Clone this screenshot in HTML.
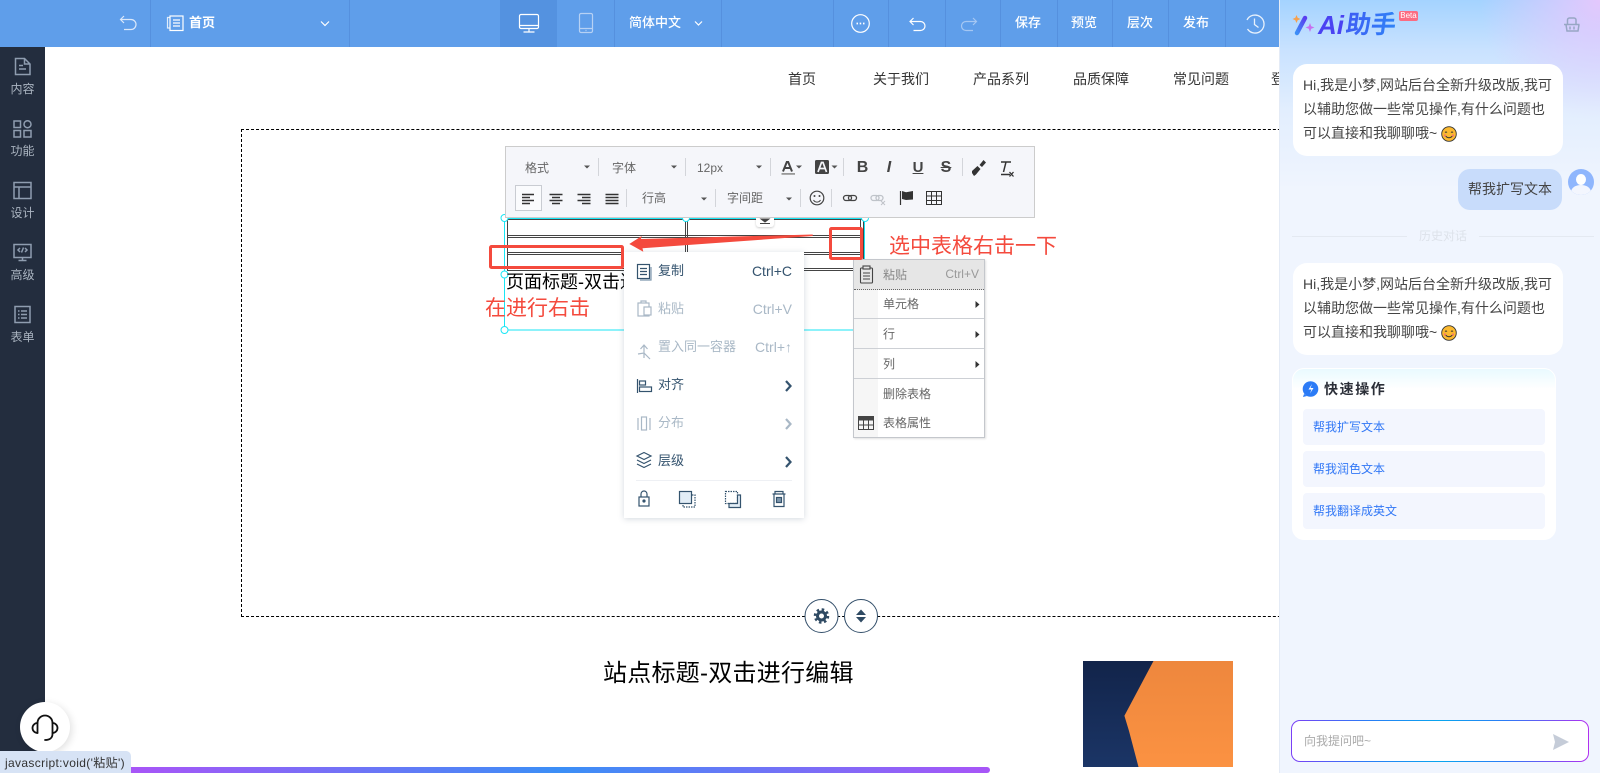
<!DOCTYPE html>
<html lang="zh-CN"><head><meta charset="utf-8"><title>编辑器</title>
<style>
*{box-sizing:border-box;margin:0;padding:0}
html,body{width:1600px;height:773px;overflow:hidden;background:#fff}
body{position:relative;font-family:"Liberation Sans","Noto Sans CJK SC",sans-serif;color:#333}
.a{position:absolute}
.t{position:absolute;white-space:nowrap;line-height:20px}
svg.l{position:absolute;left:0;top:0;width:1600px;height:773px;pointer-events:none}
.hd{left:0;top:0;width:1279px;height:47px;background:#5f9eea}
.hd i{position:absolute;top:0;width:1px;height:47px;background:#5590de}
.hd .t{color:#fff;top:13px;font-size:13px;font-weight:700}
.sb{left:0;top:47px;width:45px;height:726px;background:#232d3e}
.sb .t{left:0;width:45px;text-align:center;font-size:12px;color:#aab4c0}
.nav{font-size:14px;color:#333;top:69px}
.tb{left:505px;top:146px;width:530px;height:72px;background:#f5f6fa;border:1px solid #ccc}
.tbt{font-size:12px;color:#666}
.m1{left:624px;top:252px;width:180px;height:266px;background:#fff;box-shadow:0 1px 6px rgba(60,80,110,.22)}
.m1t{font-size:13px;color:#34536e}
.dis{color:#a9b8c6}
.m2{left:853px;top:259px;width:132px;height:179px;background:#fff;border:1px solid #c4c7cc;box-shadow:1px 1px 2px rgba(0,0,0,.12)}
.m2t{font-size:12px;color:#666}
.pn{left:1279px;top:0;width:321px;height:773px;border-left:1px solid #e4ebf6;background:radial-gradient(circle at 100% 0,#e4c8fd 0,rgba(228,200,253,0) 120px),linear-gradient(180deg,#a4d3ff 0,#c9e2ff 50px,#e2eefe 110px,#f0f5fe 190px)}
.bb{position:absolute;background:#fff;border-radius:14px}
.pt{font-size:14px;color:#444}
.qb{left:1303px;width:242px;height:36px;background:#f3f6fe;border-radius:4px}
.qt{font-size:12px;color:#3278f6;left:1313px}
</style></head><body>

<!-- page content -->
<div class="t nav" style="left:788px">首页</div>
<div class="t nav" style="left:873px">关于我们</div>
<div class="t nav" style="left:973px">产品系列</div>
<div class="t nav" style="left:1073px">品质保障</div>
<div class="t nav" style="left:1173px">常见问题</div>
<div class="t nav" style="left:1271px">登录</div>
<div class="a" style="left:241px;top:129px;width:1100px;height:488px;border:1px dashed #000"></div>
<div class="t" style="left:603px;top:659px;font-size:24px;line-height:30px;letter-spacing:.25px;color:#000">站点标题-双击进行编辑</div>

<svg class="l" viewBox="0 0 1600 773">
<defs>
<linearGradient id="nv" x1="0" y1="0" x2="0" y2="1"><stop offset="0" stop-color="#12244a"/><stop offset="1" stop-color="#1b3566"/></linearGradient>
<linearGradient id="or" x1="0" y1="0" x2="0" y2="1"><stop offset="0" stop-color="#ee873d"/><stop offset="1" stop-color="#fb9242"/></linearGradient>
</defs>
<rect x="1083" y="661" width="150" height="106" fill="url(#nv)"/>
<polygon points="1153.5,661 1233,661 1233,767 1138.5,767 1129,731 1124.4,715.7" fill="url(#or)"/>
<!-- table -->
<g stroke="#444" stroke-width="1" fill="none">
<path d="M507 219.5H865M507 235.500H865M507 237.500H865M507 252.500H865M507 254.500H865M507 268.500H865M507 270.500H865"/>
<path d="M507.5 219V271M685.5 219V271M687.5 219V271M860.5 219V271M863.5 219V271"/>
</g>
<!-- selection -->
<g stroke="#19e6f5" fill="none"><rect x="504.5" y="218.5" width="360" height="111.5"/></g>
<g stroke="#19e6f5" fill="#fff"><circle cx="504.5" cy="218" r="3.5"/><circle cx="686" cy="218" r="3.5"/><circle cx="865" cy="218" r="3.5"/><circle cx="504.5" cy="274.5" r="3.5"/><circle cx="504.5" cy="330" r="3.5"/></g>
<!-- settings buttons -->
<g fill="#fff" stroke="#34506b" stroke-width="1"><circle cx="821.5" cy="616" r="16.5"/><circle cx="861" cy="616" r="16.5"/></g>
<g fill="none" stroke="#2f4a63"><circle cx="821.5" cy="616" r="4" stroke-width="3"/><circle cx="821.5" cy="616" r="6.500" stroke-width="2.500" stroke-dasharray="2.500 2.600"/></g>
<path d="M861 609.500l5 5.500h-10zM861 622.500l5-5.500h-10z" fill="#2f4a63"/>
</svg>
<div class="a" style="left:756px;top:218px;width:18px;height:9px;background:#fff;border-radius:0 0 3px 3px;box-shadow:0 1px 2px rgba(0,0,0,.2)"></div>
<svg class="l" viewBox="0 0 1600 773"><path d="M761 219h8l-4 3zM760 223.500h10" stroke="#444" fill="#444"/></svg>
<div class="t" style="left:506px;top:271px;font-size:18px;line-height:22px;color:#000">页面标题-双击进行编辑</div>

<!-- context menu 1 -->
<div class="a m1"></div>
<div class="t m1t" style="left:658px;top:261px">复制</div>
<div class="t m1t" style="right:808px;top:261px;font-size:14px">Ctrl+C</div>
<div class="t m1t dis" style="left:658px;top:299px">粘贴</div>
<div class="t m1t dis" style="right:808px;top:299px;font-size:14px">Ctrl+V</div>
<div class="t m1t dis" style="left:658px;top:337px">置入同一容器</div>
<div class="t m1t dis" style="right:808px;top:337px;font-size:14px">Ctrl+↑</div>
<div class="t m1t" style="left:658px;top:375px">对齐</div>
<div class="t m1t dis" style="left:658px;top:413px">分布</div>
<div class="t m1t" style="left:658px;top:451px">层级</div>
<svg class="l" viewBox="0 0 1600 773">
<path d="M636 480.500H792" stroke="#eef0f4"/>
<g fill="none" stroke="#34536e" stroke-width="1.200">
<rect x="637.500" y="264.500" width="12" height="14"/><path d="M640 268.500h7M640 271.500h7M640 274.500h7"/><path d="M651 267v13h-11" stroke="#7d97ad"/>
<path d="M637.500 379v14" /><rect x="639.500" y="381" width="6" height="4"/><rect x="639.500" y="387" width="12" height="4.500"/>
<path d="M637 456l7-3.500 7 3.500-7 3.500zM637 460l7 3.500 7-3.500M637 464l7 3.500 7-3.500"/>
<path d="M786 381l4.500 5-4.500 5M786 457l4.500 5-4.500 5" stroke-width="2.200"/>
<rect x="639" y="497" width="10" height="9"/><path d="M641 497v-3a3 3 0 0 1 6 0v3"/><circle cx="644" cy="501" r="1" fill="#34536e"/>
<rect x="679.500" y="491.500" width="12" height="12" fill="#e2edf6"/><path d="M692 495h3v12h-12v-3" stroke-dasharray="1.500 1"/>
<rect x="725.500" y="491.500" width="12" height="12" stroke-dasharray="1.500 1"/><path d="M729 503.500h8.500V495h3v12.500H729z" fill="#e2edf6"/>
<path d="M772.500 494h13M775 494v-2.500h8V494M774 494v12.500h10V494"/><rect x="776.500" y="497.500" width="5" height="5" fill="#7d97ad"/>
</g>
<g fill="none" stroke="#a9b8c6" stroke-width="1.200">
<rect x="638" y="303" width="11" height="13"/><path d="M641 303v-2h5v2"/><rect x="644" y="307" width="7" height="8" fill="#fff"/>
<path d="M644 345v13M640.500 349l3.500-4 3.500 4M638 354l6-1 6 6"/>
<path d="M638 418v12M650 418v12"/><rect x="641.500" y="417" width="5" height="13"/>
<path d="M786 419l4.500 5-4.500 5" stroke-width="2.200"/>
</g>
</svg>

<!-- context menu 2 -->
<div class="a m2">
 <div class="a" style="left:0;top:0;width:24px;height:177px;background:#f6f6f6"></div>
 <div class="a" style="left:0;top:0;width:130px;height:30px;background:#e6e6e6;border-bottom:1px dotted #666"></div>
 <div class="a" style="left:0;top:58px;width:130px;height:1px;background:#cdd0d5"></div>
 <div class="a" style="left:0;top:88px;width:130px;height:1px;background:#cdd0d5"></div>
 <div class="a" style="left:0;top:118px;width:130px;height:1px;background:#cdd0d5"></div>
</div>
<div class="t m2t" style="left:883px;top:265px;color:#888">粘贴</div>
<div class="t m2t" style="right:621px;top:264px;color:#999">Ctrl+V</div>
<div class="t m2t" style="left:883px;top:294px">单元格</div>
<div class="t m2t" style="left:883px;top:324px">行</div>
<div class="t m2t" style="left:883px;top:354px">列</div>
<div class="t m2t" style="left:883px;top:384px">删除表格</div>
<div class="t m2t" style="left:883px;top:413px">表格属性</div>
<svg class="l" viewBox="0 0 1600 773">
<path d="M975.500 301l4 3.500-4 3.500zM975.500 331l4 3.500-4 3.500zM975.500 361l4 3.500-4 3.500z" fill="#333"/>
<g fill="none" stroke="#444" stroke-width="1.100"><rect x="860.500" y="268" width="12" height="15" rx="1"/><rect x="863" y="266" width="7" height="3" fill="#e6e6e6"/><path d="M863 273h7M863 276h7M863 279h7"/></g>
<rect x="858.500" y="417" width="15" height="3.500" fill="#444"/>
<g fill="none" stroke="#444"><rect x="858.500" y="416.500" width="15" height="13"/><path d="M858.500 425h15M863.500 420v9M868.500 420v9"/></g>
</svg>

<!-- rich text toolbar -->
<div class="a tb"></div>
<div class="a" style="left:514.500px;top:185px;width:27px;height:26px;background:#fafbfd;border:1px solid #c9ccd2"></div>
<div class="t tbt" style="left:525px;top:158px">格式</div>
<div class="t tbt" style="left:612px;top:158px">字体</div>
<div class="t tbt" style="left:697px;top:158px">12px</div>
<div class="t tbt" style="left:642px;top:188px">行高</div>
<div class="t tbt" style="left:727px;top:188px">字间距</div>
<svg class="l" viewBox="0 0 1600 773">
<path d="M598.500 158v18M685.500 158v18M770.500 158v18M843.500 158v18M962.500 158v18M626.500 189v18M715.500 189v18M800.500 189v18M831.500 189v18" stroke="#d3d5da"/>
<path d="M584 165.500h6l-3 3zM671 165.500h6l-3 3zM756 165.500h6l-3 3zM796 165.500h6l-3 3zM831.500 165.500h6l-3 3zM701 197.500h6l-3 3zM786 197.500h6l-3 3z" fill="#555"/>
<rect x="781.500" y="173" width="13.500" height="1.800" fill="#999"/>
<path d="M783 171.500l3.800-9.500h1.400l3.800 9.500M784.500 168h6" fill="none" stroke="#444" stroke-width="2"/>
<rect x="815" y="160" width="14" height="14" rx="1.500" fill="#444"/>
<path d="M818 172l3.500-9.500h1.500l3.500 9.500M819.500 168.500h5.500" fill="none" stroke="#f5f6fa" stroke-width="1.700"/>
<g stroke="#333" fill="none" stroke-width="1.400"><path d="M522 194.500h12M522 197.500h8M522 200.500h12M522 203.500h8"/><path d="M549.500 194.500h13M552 197.500h8M549.500 200.500h13M552 203.500h8M577.500 194.500h13M582 197.500h8.500M577.500 200.500h13M582 203.500h8.500M605.500 194.500h13M605.500 197.500h13M605.500 200.500h13M605.500 203.500h13"/></g>
<circle cx="817" cy="198" r="6.800" fill="none" stroke="#444" stroke-width="1.200"/><circle cx="814.500" cy="196" r="1" fill="#444"/><circle cx="819.500" cy="196" r="1" fill="#444"/><path d="M813.500 200a4 4 0 0 0 7 0" fill="none" stroke="#444"/>
<g fill="none" stroke="#444" stroke-width="1.300"><rect x="843.500" y="195.500" width="8" height="5" rx="2.500"/><rect x="848.500" y="195.500" width="8" height="5" rx="2.500"/></g>
<g fill="none" stroke="#bfc3c9" stroke-width="1.300"><rect x="871" y="195.500" width="8" height="5" rx="2.500"/><rect x="876" y="195.500" width="7" height="5" rx="2.500"/><path d="M881 201l4 4M885 201l-4 4" stroke-width="1"/></g>
<path d="M900.500 191v14" stroke="#333" stroke-width="1.200"/><path d="M902 191l4 1.200 7-1.200v8.500l-7 .5-4-1z" fill="#333"/>
<g fill="none" stroke="#333"><rect x="926.500" y="191.500" width="15" height="13"/><path d="M926.500 196h15M926.500 200.500h15M931.500 192v12M936.500 192v12"/></g>
<path d="M972 171l5.500-5 3 3-4.500 5.500-2 1.500-2-3zM979.500 165l4-5 2.500 2.500-4 4.500z" fill="#333"/>
<path d="M1001 162h10M1006 162l-2.500 10M1001 174.500h9" fill="none" stroke="#333" stroke-width="1.500"/><path d="M1009.500 172l4 4.500M1013.500 172l-4 4.500" stroke="#333" fill="none" stroke-width="1.300"/>
</svg>
<div class="t" style="left:856.500px;top:157.500px;font-size:16px;font-weight:700;color:#444;width:12px;text-align:center">B</div>
<div class="t" style="left:883px;top:157.500px;font-size:16px;font-weight:700;font-style:italic;color:#444;width:12px;text-align:center">I</div>
<div class="t" style="left:912px;top:157.500px;font-size:15px;font-weight:700;color:#444;width:12px;text-align:center;text-decoration:underline">U</div>
<div class="t" style="left:940px;top:157.500px;font-size:16px;font-weight:700;color:#444;width:12px;text-align:center;text-decoration:line-through">S</div>

<!-- annotations -->
<svg class="l" viewBox="0 0 1600 773">
<g fill="none" stroke="#f44a3d" stroke-width="3"><rect x="490.500" y="246.500" width="132" height="21" rx="1"/><rect x="830.500" y="228.500" width="31" height="30" rx="1"/></g>
<path d="M812.700 234.500L641 239 641.700 236 629.300 244 643.300 251.700 642.500 248.300 812.700 236z" fill="#f44a3d"/>
</svg>
<div class="t" style="left:889px;top:233px;font-size:21px;line-height:28px;color:#f44a3d">选中表格右击一下</div>
<div class="t" style="left:485px;top:295px;font-size:21px;line-height:28px;color:#f44a3d">在进行右击</div>

<!-- top bar -->
<div class="a hd">
 <i style="left:150px"></i><i style="left:349px"></i>
 <div class="a" style="left:500px;top:0;width:57px;height:47px;background:#5492e0"></div>
 <i style="left:614px"></i><i style="left:721px"></i><i style="left:833px"></i><i style="left:888px"></i><i style="left:945px"></i><i style="left:1000px"></i><i style="left:1057px"></i><i style="left:1112px"></i><i style="left:1168px"></i><i style="left:1225px"></i>
 <div class="t" style="left:189px">首页</div>
 <div class="t" style="left:629px;font-weight:500;font-size:13px">简体中文</div>
 <div class="t" style="left:1015px;font-weight:500">保存</div>
 <div class="t" style="left:1071px;font-weight:500">预览</div>
 <div class="t" style="left:1127px;font-weight:500">层次</div>
 <div class="t" style="left:1183px;font-weight:500">发布</div>
</div>
<svg class="l" viewBox="0 0 1600 773">
<g fill="none" stroke="#dbe8fa" stroke-width="1.200">
<path d="M124 16l-3.500 3.500 3.500 3.500M121 19.500h10a4.500 4.500 0 0 1 0 10h-7"/>
</g>
<g fill="none" stroke="#fff" stroke-width="1.200">
<rect x="170" y="16" width="13" height="14.500"/><path d="M170 17.500h-2.500V28h2.500" opacity=".8"/><path d="M173 20h7M173 23h7M173 26h7"/>
<path d="M321 21.500l4 4 4-4"/>
<rect x="519.500" y="14.500" width="19" height="14" rx="1.500"/><path d="M519.500 25.500h19M529 28.500v3.500M523.500 32h11"/>
<path d="M695 21.500l3.500 3.500 3.500-3.500"/>
<circle cx="860.500" cy="23.500" r="8.800"/><path d="M856.500 23.500h1.500M859.700 23.500h1.500M863 23.500h1.500" stroke-width="1.800"/>
<path d="M913.500 18l-3.500 3.500 3.500 3.500M910.500 21.500h10a4.500 4.500 0 0 1 0 9h-7"/>
</g>
<g fill="none" stroke="#b6d1f4" stroke-width="1.200">
<rect x="579.500" y="13.500" width="13" height="19" rx="1.500"/><path d="M579.500 28.500h13M585.500 30.500h1"/>
</g>
<g fill="none" stroke="#a5c7f3" stroke-width="1.200"><path d="M973 18l3.500 3.500-3.500 3.500M976 21.500h-10a4.500 4.500 0 0 0 0 9h7"/></g>
<g fill="none" stroke="#e8f1fc" stroke-width="1.300"><path d="M1247 20a9 9 0 1 1 .5 9"/><path d="M1254.500 18.500v6l4 3"/></g>
</svg>

<!-- left sidebar -->
<div class="a sb">
 <div class="t" style="top:32px">内容</div>
 <div class="t" style="top:94px">功能</div>
 <div class="t" style="top:156px">设计</div>
 <div class="t" style="top:218px">高级</div>
 <div class="t" style="top:280px">表单</div>
</div>
<svg class="l" viewBox="0 0 1600 773">
<g fill="none" stroke="#8f9db0" stroke-width="1.500">
<path d="M15.500 58.500h9l5.500 5.500v10.500h-14.500zM24.500 58.500V64h5.500"/><path d="M19 65.500h4M19 69h7"/>
<rect x="14" y="121" width="6.500" height="6.500"/><circle cx="27.500" cy="124.200" r="3.500"/><rect x="14" y="130.500" width="6.500" height="6.500"/><rect x="24" y="130.500" width="7" height="6.500"/>
<rect x="14" y="182.500" width="17" height="16"/><path d="M14 187h17M19 187v11.500" />
<rect x="14" y="244.500" width="17" height="13"/><path d="M22.500 258v2.500M18.500 260.500h8M20 248l-2 2 2 2M25 248l2 2-2 2M23.500 247.500l-2 5"/>
<rect x="15" y="306.500" width="15" height="16"/><path d="M18 311h1.500M21 311h6M18 314.500h1.500M21 314.500h6M18 318h1.500M21 318h6"/>
</g></svg>

<!-- AI panel -->
<div class="a pn"></div>
<svg class="l" viewBox="0 0 1600 773">
<defs><linearGradient id="wd" x1="0" y1="1" x2="1" y2="0"><stop offset="0" stop-color="#3d8ef6"/><stop offset="1" stop-color="#5a3df0"/></linearGradient></defs>
<path d="M1297 33l8-15" stroke="url(#wd)" stroke-width="4.500" stroke-linecap="round"/>
<path d="M1296.500 15l1.200 2.800 2.800 1.200-2.800 1.200-1.200 2.800-1.200-2.800-2.800-1.200 2.800-1.200z" fill="#f7a04d"/>
<path d="M1310 23l1.200 3.300 3.300 1.200-3.300 1.200-1.200 3.300-1.200-3.300-3.300-1.200 3.300-1.200z" fill="#c86ff0"/>
<g fill="none" stroke="#97a6c4" stroke-width="1.500"><path d="M1564 24.500h15.500M1566 24.500l1 6.500h11l1-6.500M1567.500 24v-4a2 2 0 0 1 2-2h4.500a2 2 0 0 1 2 2v4M1570 26.500v3M1574 26.500v3"/></g>
</svg>
<div class="t" style="left:1318px;top:12px;font-size:26px;line-height:26px;font-weight:700;font-style:italic;color:#4a42f2">Ai</div>
<div class="t" style="left:1346px;top:12px;font-size:25px;line-height:26px;font-weight:700;background:linear-gradient(90deg,#3e5cf4,#2f83f7);-webkit-background-clip:text;background-clip:text;color:transparent;transform:skewX(-8deg)">助手</div>
<div class="t" style="left:1399px;top:11px;width:19px;height:10px;background:#fb6c82;border-radius:2px;font-size:8px;line-height:10px;color:#fff;text-align:center">Beta</div>

<div class="bb" style="left:1293px;top:64px;width:270px;height:92px"></div>
<div class="t pt" style="left:1303px;top:75px">Hi,我是小梦,网站后台全新升级改版,我可</div>
<div class="t pt" style="left:1303px;top:99px">以辅助您做一些常见操作,有什么问题也</div>
<div class="t pt" style="left:1303px;top:123px">可以直接和我聊聊哦~</div>
<div class="a" style="left:1458px;top:169px;width:104px;height:41px;background:#c8dcfb;border-radius:12px"></div>
<div class="t pt" style="left:1468px;top:179px">帮我扩写文本</div>
<div class="a" style="left:1568px;top:169px;width:26px;height:26px;border-radius:50%;background:#8fb6fd;overflow:hidden"><div class="a" style="left:8px;top:5px;width:10px;height:11px;border-radius:50%;background:#fff"></div><div class="a" style="left:3px;top:16px;width:20px;height:14px;border-radius:50%;background:#f3f6fe"></div></div>
<div class="a" style="left:1292px;top:236px;width:115px;height:1px;background:#e4e9f1"></div>
<div class="a" style="left:1479px;top:236px;width:115px;height:1px;background:#e4e9f1"></div>
<div class="t" style="left:1419px;top:226px;font-size:12px;color:#dde2ea">历史对话</div>

<div class="bb" style="left:1293px;top:263px;width:270px;height:92px"></div>
<div class="t pt" style="left:1303px;top:274px">Hi,我是小梦,网站后台全新升级改版,我可</div>
<div class="t pt" style="left:1303px;top:298px">以辅助您做一些常见操作,有什么问题也</div>
<div class="t pt" style="left:1303px;top:322px">可以直接和我聊聊哦~</div>
<svg class="l" viewBox="0 0 1600 773">
<g id="em"><circle cx="1449" cy="134" r="7.300" fill="#fbb92f" stroke="#333" stroke-width=".9"/><path d="M1445 132.500q1-1 2 0M1451 132.500q1-1 2 0M1445.500 136q3.500 3.500 7 0" fill="none" stroke="#333" stroke-width=".9"/><circle cx="1445" cy="135.500" r="1.100" fill="#f4766e"/><circle cx="1453" cy="135.500" r="1.100" fill="#f4766e"/></g>
<g transform="translate(0 199)"><circle cx="1449" cy="134" r="7.300" fill="#fbb92f" stroke="#333" stroke-width=".9"/><path d="M1445 132.500q1-1 2 0M1451 132.500q1-1 2 0M1445.500 136q3.500 3.500 7 0" fill="none" stroke="#333" stroke-width=".9"/><circle cx="1445" cy="135.500" r="1.100" fill="#f4766e"/><circle cx="1453" cy="135.500" r="1.100" fill="#f4766e"/></g>
</svg>

<div class="a" style="left:1292px;top:368px;width:264px;height:172px;border-radius:12px;border:1px solid #fff;background:linear-gradient(180deg,#e9faff 0,#fff 20px)"></div>
<svg class="l" viewBox="0 0 1600 773"><circle cx="1310.500" cy="389" r="7.800" fill="#2b7bf6"/><path d="M1304 394l-1 3 4-1z" fill="#2b7bf6"/><path d="M1312 384l-3.500 5.500h3l-1.500 4 3.500-5.500h-3z" fill="#fff"/></svg>
<div class="t" style="left:1324px;top:379px;font-size:14px;font-weight:700;letter-spacing:1.600px;color:#2b2f38">快速操作</div>
<div class="a qb" style="top:409px"></div><div class="t qt" style="top:417px">帮我扩写文本</div>
<div class="a qb" style="top:451px"></div><div class="t qt" style="top:459px">帮我润色文本</div>
<div class="a qb" style="top:493px"></div><div class="t qt" style="top:501px">帮我翻译成英文</div>

<div class="a" style="left:1291px;top:720px;width:298px;height:42px;border-radius:9px;padding:1px;background:linear-gradient(90deg,#7a3ff5,#2b7bf6 25%,#08a5ee 50%,#2b7bf6 72%,#b22ff0)"><div style="width:100%;height:100%;background:#fff;border-radius:8px"></div></div>
<div class="t" style="left:1304px;top:731px;font-size:12px;color:#aaa">向我提问吧~</div>
<svg class="l" viewBox="0 0 1600 773"><path d="M1553 734l16 8-16 8 2-8z" fill="#c5ccd8"/></svg>

<!-- floating bottom elements -->
<div class="a" style="left:131px;top:767px;width:859px;height:6px;border-radius:0 3px 3px 0;background:linear-gradient(90deg,#a855f7,#3b8ff6 50%,#a855f7)"></div>
<div class="a" style="left:20px;top:702px;width:50px;height:50px;border-radius:50%;background:#fff;box-shadow:2px 2px 8px rgba(0,0,0,.12)"></div>
<svg class="l" viewBox="0 0 1600 773"><g fill="none" stroke="#111" stroke-width="1.800" stroke-linecap="round"><path d="M37.500 733V723a7.500 7.500 0 0 1 15 0V734c0 4-3 6-7.500 6"/><path d="M37.500 723a5 5 0 0 0 0 10M52.500 723a5 5 0 0 1 0 10"/></g></svg>
<div class="a" style="left:0;top:751px;width:131px;height:22px;background:#d7e3f5;border-radius:0 5px 0 0"></div>
<div class="t" style="left:5px;top:753px;font-size:12px;letter-spacing:.35px;color:#333">javascript:void('粘贴')</div>
</body></html>
